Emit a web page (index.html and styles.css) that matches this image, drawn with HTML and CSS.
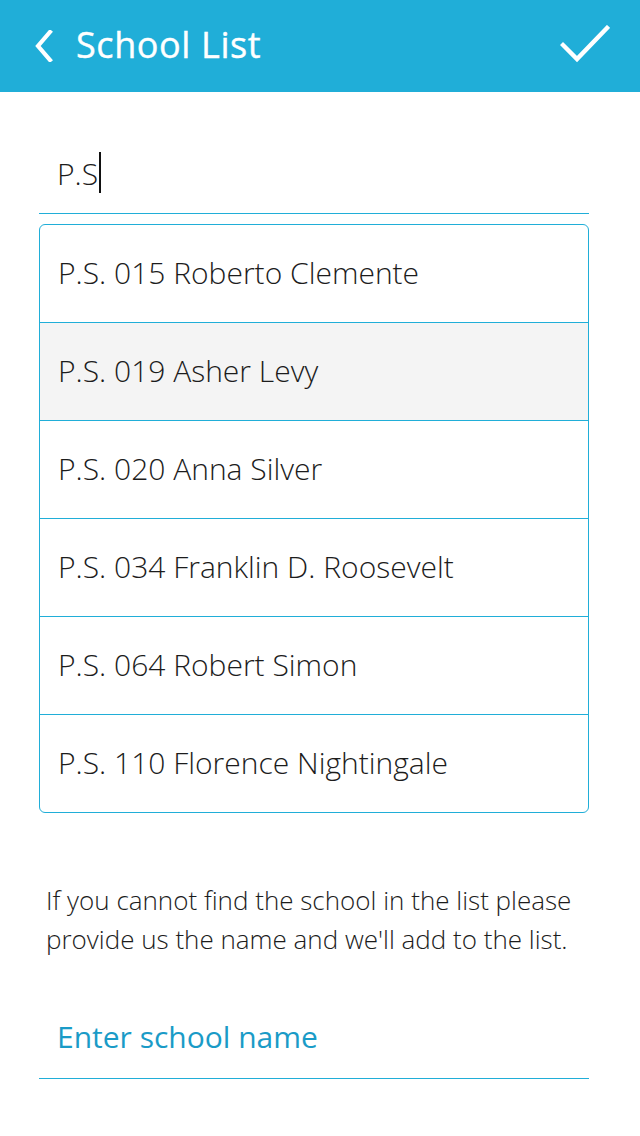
FILE: index.html
```html
<!DOCTYPE html>
<html>
<head>
<meta charset="utf-8">
<link rel="stylesheet" href="styles.css">
</head>
<body>
<header class="appbar">
  <div class="appbar-left">
    <svg class="icon-back" width="24" height="32" viewBox="0 0 24 32"><path d="M19 2 L7 16 L19 30" fill="none" stroke="#fff" stroke-width="4.2" stroke-linecap="square"/></svg>
    <h1 class="title">School List</h1>
  </div>
  <svg class="icon-check" width="50" height="40" viewBox="0 0 50 40"><path d="M3 20 L17 34 L47 3" fill="none" stroke="#fff" stroke-width="4.4" stroke-linecap="square"/></svg>
</header>
<main class="content">
  <div class="search">
    <span class="search-text">P.S</span><span class="caret"></span>
  </div>
  <ul class="list">
    <li class="item">P.S. 015 Roberto Clemente</li>
    <li class="item item-active">P.S. 019 Asher Levy</li>
    <li class="item">P.S. 020 Anna Silver</li>
    <li class="item">P.S. 034 Franklin D. Roosevelt</li>
    <li class="item">P.S. 064 Robert Simon</li>
    <li class="item">P.S. 110 Florence Nightingale</li>
  </ul>
  <p class="note">If you cannot find the school in the list please provide us the name and we'll add to the list.</p>
  <div class="entry">
    <span class="placeholder">Enter school name</span>
  </div>
</main>
</body>
</html>
```
FILE: styles.css
```css
* { box-sizing: border-box; }
html, body { margin: 0; padding: 0; }
body {
  width: 640px;
  height: 1136px;
  background: #fff;
  font-family: "Open Sans", "Liberation Sans", sans-serif;
  color: #1c1c1c;
  overflow: hidden;
}
.appbar {
  height: 92px;
  background: #20aed8;
  display: flex;
  align-items: center;
  justify-content: space-between;
  padding: 0 30px 0 31px;
}
.appbar-left {
  display: flex;
  align-items: center;
  gap: 21px;
}
.icon-back { display: block; }
.title {
  margin: 0;
  color: #fff;
  font-size: 36px;
  font-weight: 500;
  letter-spacing: 0.6px;
  line-height: 1;
  margin-top: -2px;
  -webkit-text-stroke: 0.4px #fff;
}
.icon-check { display: block; margin-top: -2px; }
.content {
  padding: 0 51px 0 39px;
}
.search {
  height: 122px;
  border-bottom: 1.5px solid #20aed8;
  display: flex;
  align-items: center;
  padding: 42px 0 0 18px;
}
.search-text {
  font-size: 30px;
  font-weight: 300;
  color: #1c1c1c;
}
.caret {
  display: inline-block;
  width: 2px;
  height: 41px;
  background: #111;
  margin-left: 1px;
  margin-top: -2px;
}
.list {
  list-style: none;
  margin: 10px 0 0;
  padding: 0;
  border: 1px solid #20aed8;
  border-radius: 6px;
  overflow: hidden;
}
.item {
  height: 98px;
  display: flex;
  align-items: center;
  padding: 0 0 3px 18px;
  font-size: 30px;
  font-weight: 300;
  color: #1c1c1c;
  border-top: 1px solid #20aed8;
}
.item:first-child { border-top: none; height: 97px; }
.item-active { background: #f4f4f4; }
.note {
  margin: 68px 0 0 7px;
  font-size: 26px;
  font-weight: 300;
  line-height: 39px;
  color: #1c1c1c;
}
.entry {
  margin-top: 32px;
  height: 88px;
  border-bottom: 1px solid #20aed8;
  display: flex;
  align-items: center;
  padding: 4px 0 0 18px;
}
.placeholder {
  font-size: 30px;
  font-weight: 400;
  color: #1a9bc7;
}
```
